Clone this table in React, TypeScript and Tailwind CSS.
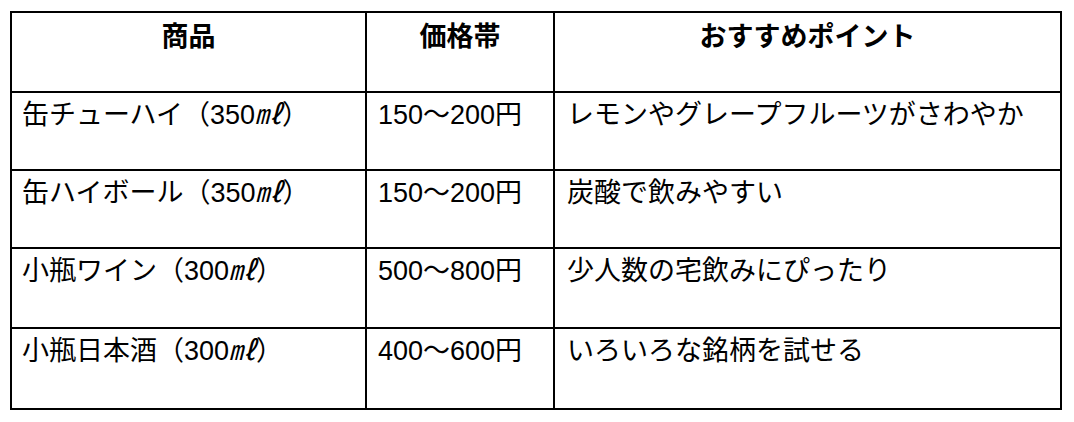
import React from 'react';

const rows = [
  { name: '缶チューハイ', vol: '350', price: '150〜200円', point: 'レモンやグレープフルーツがさわやか', h: 'h-[78px]' },
  { name: '缶ハイボール', vol: '350', price: '150〜200円', point: '炭酸で飲みやすい', h: 'h-[78px]' },
  { name: '小瓶ワイン', vol: '300', price: '500〜800円', point: '少人数の宅飲みにぴったり', h: 'h-[80px]' },
  { name: '小瓶日本酒', vol: '300', price: '400〜600円', point: 'いろいろな銘柄を試せる', h: 'h-[81px]' },
];

export default function App() {
  return (
    <div
      className="w-[1074px] h-[422px] bg-white text-black pt-[11px] pl-[10px]"
      style={{ fontFamily: '"Liberation Sans", "Noto Sans CJK JP", sans-serif' }}
    >
      <table className="table-fixed border-separate border-spacing-0 border-l-2 border-t-2 border-black w-[1052px] text-[27px] leading-[32px]">
        <colgroup>
          <col className="w-[355px]" />
          <col className="w-[188px]" />
          <col className="w-[507px]" />
        </colgroup>
        <thead>
          <tr>
            <th className="h-[80px] align-top pt-[8px] border-r-2 border-b-2 border-black font-bold text-center">商品</th>
            <th className="h-[80px] align-top pt-[8px] border-r-2 border-b-2 border-black font-bold text-center">価格帯</th>
            <th className="h-[80px] align-top pt-[8px] border-r-2 border-b-2 border-black font-bold text-center">おすすめポイント</th>
          </tr>
        </thead>
        <tbody>
          {rows.map((r) => (
            <tr key={r.name}>
              <td className={`${r.h} align-top pt-[6px] pl-[10px] border-r-2 border-b-2 border-black`}>
                {r.name}（{r.vol}
                <span className="italic">㎖</span>）
              </td>
              <td className={`${r.h} align-top pt-[6px] pl-[11px] border-r-2 border-b-2 border-black`}>{r.price}</td>
              <td className={`${r.h} align-top pt-[6px] pl-[12px] border-r-2 border-b-2 border-black whitespace-nowrap`}>{r.point}</td>
            </tr>
          ))}
        </tbody>
      </table>
    </div>
  );
}
